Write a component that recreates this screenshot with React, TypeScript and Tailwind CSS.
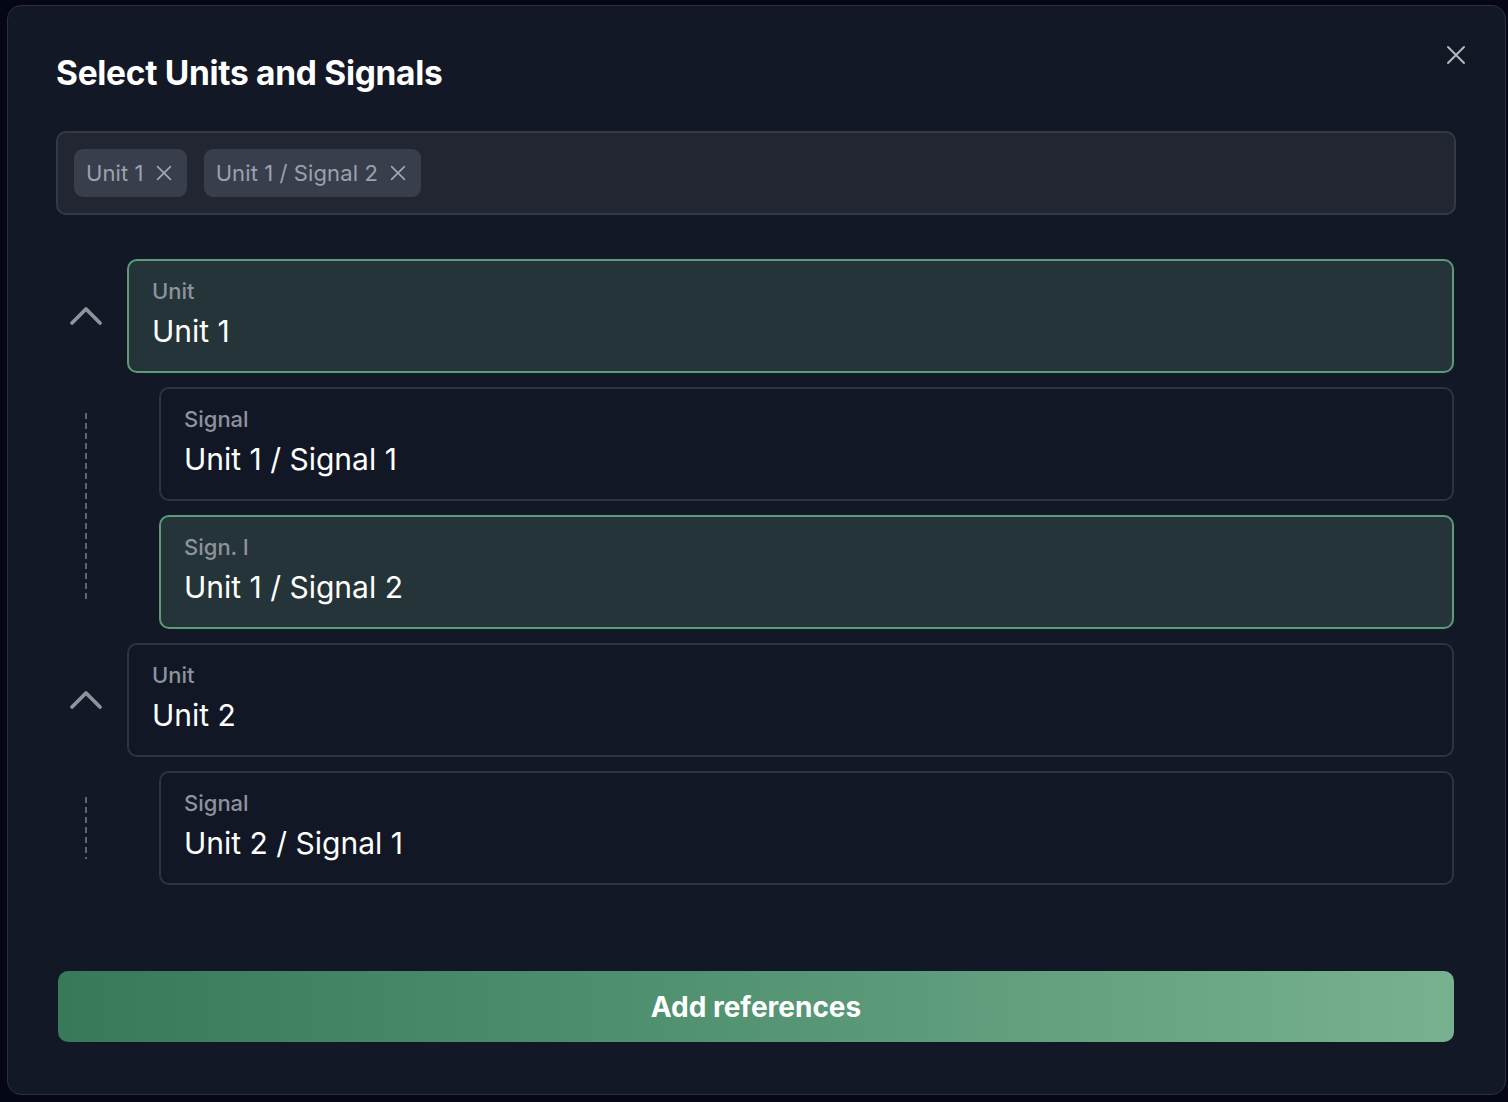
const font = { fontFamily: "Inter, 'Noto Sans', sans-serif" };

function Chevron() {
  return (
    <svg width="34" height="20" viewBox="0 0 34 20" fill="none">
      <path d="M3 17 L17 3 L31 17" stroke="#8e939e" strokeWidth="3.8" strokeLinecap="round" strokeLinejoin="round" />
    </svg>
  );
}

function XIcon({ size, color, width }: { size: number; color: string; width: number }) {
  return (
    <svg width={size} height={size} viewBox="0 0 20 20" fill="none">
      <path d="M2 2 L18 18 M18 2 L2 18" stroke={color} strokeWidth={width} strokeLinecap="round" />
    </svg>
  );
}

function Chip({ text }: { text: string }) {
  return (
    <div className="flex h-[48px] items-center gap-[12px] rounded-[9px] bg-[#393e4c] pl-[12px] pr-[15px] text-[22px] tracking-[0.1px] text-[#9ca1ac]">
      <span>{text}</span>
      <XIcon size={16} color="#a3a8b2" width={2} />
    </div>
  );
}

function Row({ label, value, selected }: { label: string; value: string; selected?: boolean }) {
  return (
    <div
      className={
        "flex h-[114px] flex-1 flex-col justify-center rounded-[10px] border-2 pb-[6px] pl-[23px] " +
        (selected ? "border-[#5c9b78] bg-[#243438]" : "border-[#2e3341] bg-[#121725]")
      }
    >
      <div className="text-[22px] font-medium leading-[28px] text-[#8d929d]">{label}</div>
      <div className="mt-[8px] text-[30px] leading-[36px] text-white">{value}</div>
    </div>
  );
}

function Group({
  unit,
  selected,
  signals,
}: {
  unit: string;
  selected?: boolean;
  signals: { label: string; value: string; selected?: boolean }[];
}) {
  return (
    <div className="flex flex-col gap-[14px]">
      <div className="flex items-center">
        <div className="flex w-[71px] justify-start pl-[13px]">
          <Chevron />
        </div>
        <Row label="Unit" value={unit} selected={selected} />
      </div>
      <div className="flex">
        <div className="flex w-[103px] py-[26px] pl-[29px]">
          <div className="w-[2px] bg-[repeating-linear-gradient(to_bottom,#5f6473_0_6px,transparent_6px_10px)]" />
        </div>
        <div className="flex flex-1 flex-col gap-[14px]">
          {signals.map((s) => (
            <div key={s.value} className="flex">
              <Row label={s.label} value={s.value} selected={s.selected} />
            </div>
          ))}
        </div>
      </div>
    </div>
  );
}

export default function App() {
  return (
    <div className="min-h-[1102px] w-full bg-[#060716] pl-[7px] pt-[5px]" style={font}>
      <div className="relative flex h-[1090px] w-[1499px] flex-col rounded-[14px] border border-[#2b303d] bg-[#131826] pl-[48px] pr-[49px] pt-[47px]">
        <button className="absolute right-[39px] top-[39px]">
          <XIcon size={20} color="#b3b7bf" width={2} />
        </button>
        <h1 className="text-[33.5px] font-bold leading-[40px] tracking-[-0.3px] text-white">Select Units and Signals</h1>
        <div className="mt-[38px] flex h-[84px] items-center gap-[17px] rounded-[10px] border-2 border-[#343947] bg-[#222633] px-[16px]">
          <Chip text="Unit 1" />
          <Chip text="Unit 1 / Signal 2" />
        </div>
        <div className="mt-[44px] flex flex-col gap-[14px] pr-[2px]">
          <Group
            unit="Unit 1"
            selected
            signals={[
              { label: "Signal", value: "Unit 1 / Signal 1" },
              { label: "Sign. l", value: "Unit 1 / Signal 2", selected: true },
            ]}
          />
          <Group unit="Unit 2" signals={[{ label: "Signal", value: "Unit 2 / Signal 1" }]} />
        </div>
        <button className="mt-[86px] ml-[2px] mr-[2px] flex h-[71px] items-center justify-center rounded-[10px] bg-[linear-gradient(to_right,#377959,#4d8f6e_40%,#78b18f)] text-[28px] font-bold text-white">
          Add references
        </button>
      </div>
    </div>
  );
}
